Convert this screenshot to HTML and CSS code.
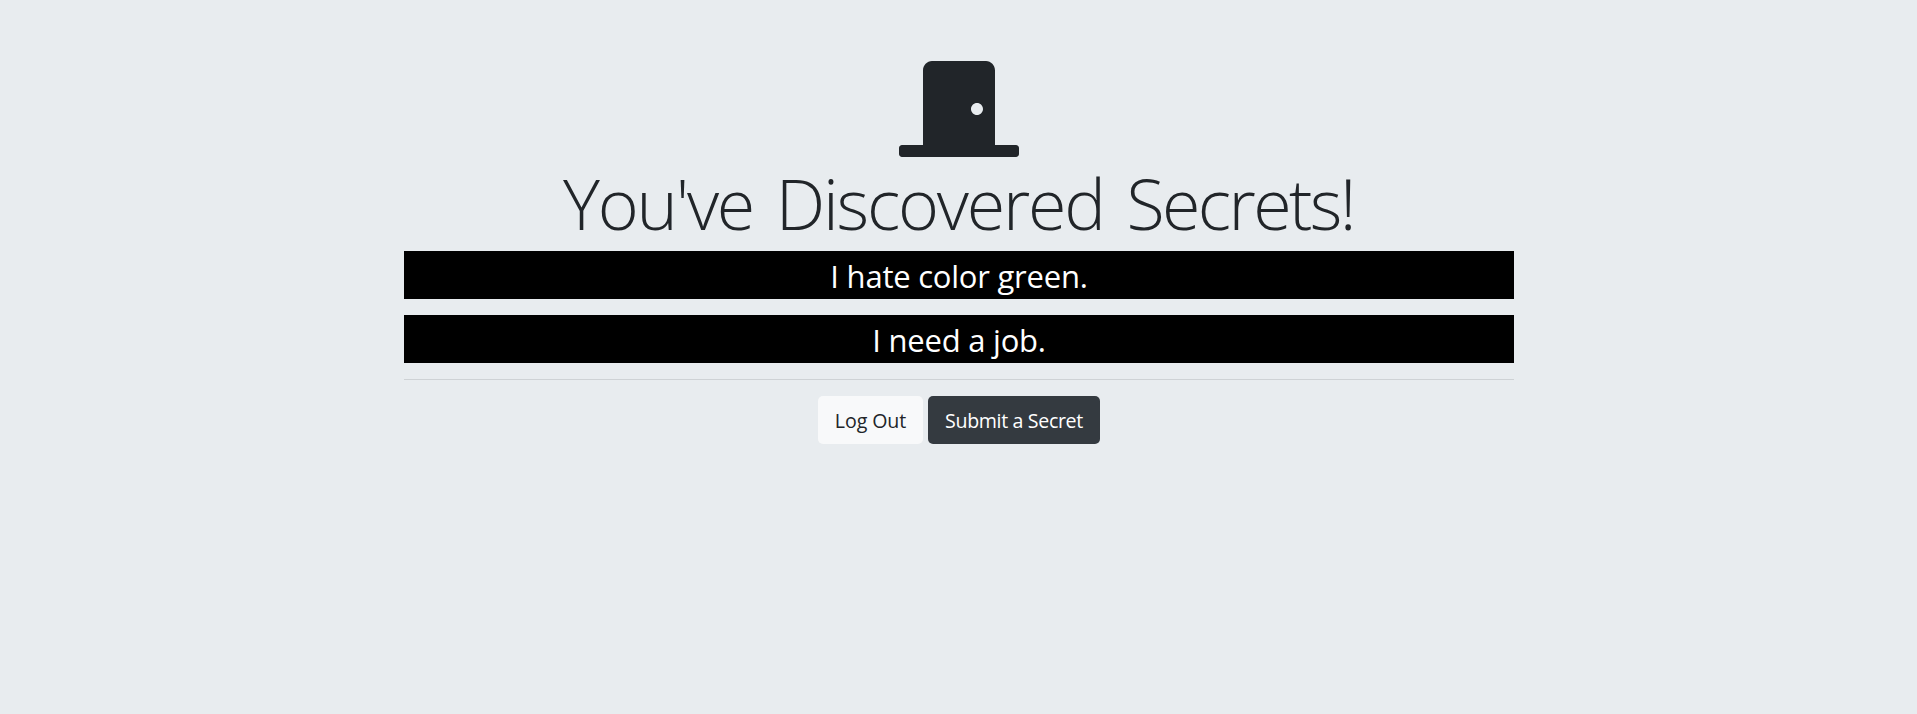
FILE: index.html
```html
<!DOCTYPE html>
<html lang="en">
<head>
<meta charset="utf-8">
<title>Secrets</title>
<link rel="stylesheet" href="styles.css">
</head>
<body>
<main class="container">
  <svg class="door" viewBox="0 0 640 512" aria-hidden="true">
    <path fill-rule="evenodd" d="M624 448H512V50.800C512 22.780 490.470 0 464 0H175.990c-26.470 0-48 22.780-48 50.800V448H16c-8.840 0-16 7.160-16 16v32c0 8.840 7.160 16 16 16h608c8.840 0 16-7.160 16-16v-32c0-8.840-7.160-16-16-16zM415.990 288.020c-17.670 0-32-14.330-32-32.010s14.330-32 32-32 32 14.330 32 32-14.320 32.010-32 32.010z"/>
  </svg>
  <h1 class="title">You've Discovered <span class="last-word">Secrets!</span></h1>
  <p class="secret">I hate color green.</p>
  <p class="secret">I need a job.</p>
  <hr class="divider">
  <div class="actions">
    <a class="btn btn-light">Log Out</a>
    <a class="btn btn-dark">Submit a Secret</a>
  </div>
</main>
</body>
</html>
```
FILE: styles.css
```css
* { box-sizing: border-box; }
body {
  margin: 0;
  min-height: 100vh;
  background: #e8ecef;
  color: #212529;
  font-family: "Open Sans", "Noto Sans", sans-serif;
}
.container {
  width: 1140px;
  margin: 0 auto;
  padding: 61px 15px 0;
  text-align: center;
}
.door {
  display: block;
  width: 120px;
  height: 96px;
  margin: 0 auto;
  fill: #212529;
}
.title {
  height: 86px;
  margin: 0 0 8px;
  font-size: 70px;
  font-weight: 300;
  line-height: 93px;
  letter-spacing: -2.2px;
  word-spacing: 6.6px;
  white-space: nowrap;
}
.last-word { letter-spacing: -2.6px; }
.secret {
  height: 48px;
  margin: 0 0 16px;
  padding-left: 1px;
  background: #000;
  color: #fff;
  font-size: 31px;
  line-height: 50px;
  letter-spacing: -0.23px;
}
.divider {
  height: 1px;
  margin: 0 0 16px;
  border: 0;
  background: #ced2d5;
}
.actions {
  display: flex;
  justify-content: center;
  gap: 5px;
}
.btn {
  height: 48px;
  padding-left: 1px;
  border-radius: 5px;
  font-size: 19.6px;
  line-height: 50px;
  white-space: nowrap;
}
.btn-light { width: 105px; background: #f8f9fa; letter-spacing: -0.1px; }
.btn-dark { width: 172px; background: #343a40; color: #fff; letter-spacing: -0.35px; }
```
